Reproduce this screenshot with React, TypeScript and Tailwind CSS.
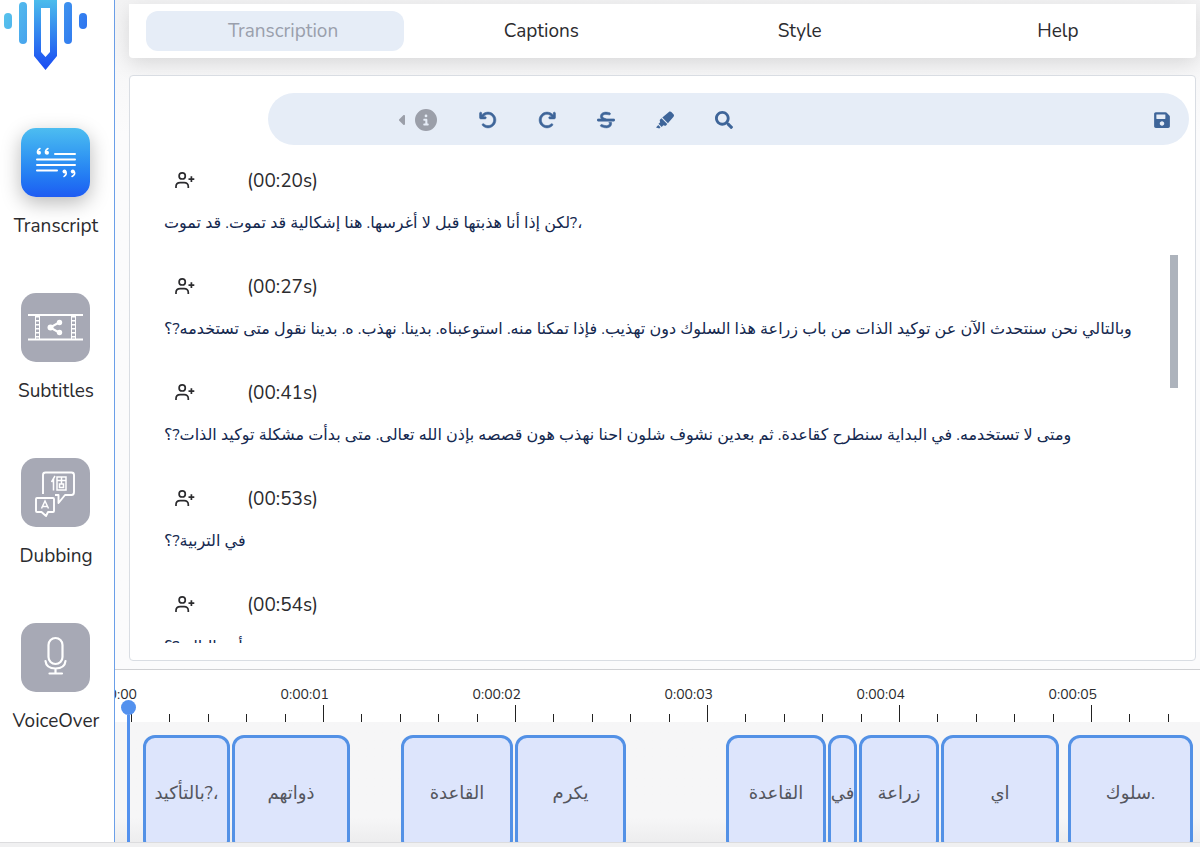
import React from "react";
import { FaArrowRotateLeft, FaArrowRotateRight, FaStrikethrough, FaCircleInfo, FaCaretLeft } from "react-icons/fa6";
import { FaHighlighter, FaSearch, FaSave } from "react-icons/fa";

const tabs = ["Transcription", "Captions", "Style", "Help"];

const segments = [
  { time: "(00:20s)", text: "لكن إذا أنا هذبتها قبل لا أغرسها. هنا إشكالية قد تموت. قد تموت?،" },
  {
    time: "(00:27s)",
    text: "وبالتالي نحن سنتحدث الآن عن توكيد الذات من باب زراعة هذا السلوك دون تهذيب. فإذا تمكنا منه. استوعبناه. بدينا. نهذب. ه. بدينا نقول متى تستخدمه?؟",
  },
  {
    time: "(00:41s)",
    text: "ومتى لا تستخدمه. في البداية سنطرح كقاعدة. ثم بعدين نشوف شلون احنا نهذب هون قصصه بإذن الله تعالى. متى بدأت مشكلة توكيد الذات?؟",
  },
  { time: "(00:53s)", text: "في التربية?؟" },
  { time: "(00:54s)", text: "أي بالتالي?؟" },
];

const clips = [
  { start: 28, end: 115, text: "بالتأكيد?،" },
  { start: 117, end: 235, text: "ذواتهم" },
  { start: 286, end: 398, text: "القاعدة" },
  { start: 400, end: 511, text: "يكرم" },
  { start: 611, end: 711, text: "القاعدة" },
  { start: 713, end: 742, text: "في" },
  { start: 744, end: 824, text: "زراعة" },
  { start: 826, end: 944, text: "اي" },
  { start: 953, end: 1078, text: "سلوك." },
];

const timeLabels = ["0:00:01", "0:00:02", "0:00:03", "0:00:04", "0:00:05"];
const tickGroups = [0, 1, 2, 3, 4, 5];

function Logo() {
  return (
    <svg viewBox="0 0 92 72" className="h-[72px] w-[92px]" role="img" aria-label="Logo">
      <defs>
        <linearGradient id="logo-bars" gradientUnits="userSpaceOnUse" x1="4" y1="0" x2="92" y2="40">
          <stop offset="0" stopColor="#5ac8ec" />
          <stop offset="1" stopColor="#2a6cf0" />
        </linearGradient>
        <linearGradient id="logo-pen" gradientUnits="userSpaceOnUse" x1="45" y1="0" x2="45" y2="66">
          <stop offset="0" stopColor="#4bbcec" />
          <stop offset="1" stopColor="#1c50f2" />
        </linearGradient>
      </defs>
      <g fill="url(#logo-bars)">
        <rect x="4" y="13" width="8" height="16" rx="4" />
        <rect x="19" y="2" width="8" height="42" rx="4" />
        <rect x="64" y="2" width="8" height="42" rx="4" />
        <rect x="79" y="13" width="8" height="16" rx="4" />
      </g>
      <path fill="url(#logo-pen)" fillRule="evenodd" d="M34 0H57V56L45.500 70L34 56ZM41 8V52L45.500 57L50 52V8Z" />
    </svg>
  );
}

function TranscriptIcon() {
  return (
    <svg viewBox="0 0 69 69" className="size-full" aria-hidden="true">
      <g stroke="#fff" strokeWidth="2" strokeLinecap="round">
        <path d="M34 26H54M16 31.500H54M16 37H54M16 42.500H36" />
      </g>
      <g fill="none" stroke="#fff" strokeWidth="1.500" strokeLinecap="round">
        <path d="M19 20.500Q16 22 16.500 25M27 20.500Q24 22 24.500 25" />
        <path d="M45 44Q46 46.500 43 48.500M53.500 44Q54.500 46.500 51 48.500" />
      </g>
      <g fill="#fff">
        <circle cx="18" cy="24.800" r="2" />
        <circle cx="26" cy="24.800" r="2" />
        <circle cx="43.500" cy="43.500" r="2" />
        <circle cx="51.800" cy="43.500" r="2" />
      </g>
    </svg>
  );
}

function SubtitlesIcon() {
  return (
    <svg viewBox="0 0 69 69" className="size-full" aria-hidden="true">
      <path d="M7 22H62M7 46.500H62" stroke="#fff" strokeWidth="2" />
      <path d="M14.500 22V46M18.500 22V46M50.500 22V46M54.500 22V46" stroke="#fff" strokeWidth="1" />
      <path d="M16.500 23V46M52.500 23V46" stroke="#fff" strokeWidth="4" strokeDasharray="1.500 2.500" />
      <path d="M39 29L29 34.500L39 40" fill="none" stroke="#fff" strokeWidth="2" />
      <g fill="#fff">
        <circle cx="38.500" cy="29.500" r="2.700" />
        <circle cx="29.500" cy="34.500" r="3" />
        <circle cx="38.500" cy="39.500" r="2.700" />
      </g>
    </svg>
  );
}

function DubbingIcon() {
  return (
    <svg viewBox="0 0 69 69" className="size-full" aria-hidden="true">
      <g fill="none" stroke="#fff" strokeWidth="1.900" strokeLinejoin="round">
        <path d="M22 36V17Q22 14.500 24.500 14.500H50.500Q53 14.500 53 17V34Q53 37 50.500 37H44L37.500 45V37H34" />
        <path d="M16 40H32Q33 40 33 41V53Q33 54 32 54H27L25 58L20.500 54H16Q15 54 15 53V41Q15 40 16 40Z" />
      </g>
      <g fill="none" stroke="#fff" strokeWidth="1.500">
        <path d="M34 18L30.500 24M32.500 21V32.500M36 19H45V32H36ZM36.500 22.500H44.500M40.500 19V26M38.500 26H42.500V29.500H38.500Z" />
        <path d="M20.500 50.500L24 43L27.500 50.500M21.800 48.500H26.200" />
      </g>
    </svg>
  );
}

function VoiceOverIcon() {
  return (
    <svg viewBox="0 0 69 69" className="size-full" aria-hidden="true">
      <g fill="none" stroke="#fff" strokeWidth="2.200" strokeLinecap="round">
        <rect x="27.500" y="15" width="14" height="26" rx="7" />
        <path d="M24.500 38C25 43 29 45.500 34.500 45.500S44 43 44.500 38M34.500 45.500V50M28.500 50.500H41" />
      </g>
    </svg>
  );
}

function UserPlusIcon() {
  return (
    <svg viewBox="0 0 20 20" className="size-5" fill="none" stroke="currentColor" strokeWidth="1.700" aria-hidden="true">
      <circle cx="7.200" cy="4.900" r="3.100" />
      <path d="M1 17V15.500C1 13 2.800 11.600 5.200 11.600H9.200C11.600 11.600 13.300 13 13.300 15.500V17" />
      <path d="M16.400 5.200V11M13.500 8.100H19.300" />
    </svg>
  );
}

const modes = [
  { label: "Transcript", icon: TranscriptIcon, active: true },
  { label: "Subtitles", icon: SubtitlesIcon, active: false },
  { label: "Dubbing", icon: DubbingIcon, active: false },
  { label: "VoiceOver", icon: VoiceOverIcon, active: false },
];

function Sidebar() {
  return (
    <aside className="flex w-[115px] shrink-0 flex-col overflow-hidden border-r border-[#6b9fe8] bg-white">
      <Logo />
      <nav className="mt-14 flex flex-col gap-[53px] pr-0.5">
        {modes.map(({ label, icon: Icon, active }) => (
          <button key={label} type="button" className="flex flex-col items-center">
            <span
              className={
                active
                  ? "mr-0.5 size-[69px] rounded-[15px] bg-linear-to-b from-[#4dbdf0] to-[#1f5bf2] shadow-[0_6px_20px_rgba(0,0,0,0.28)]"
                  : "mr-0.5 size-[69px] rounded-[15px] bg-[#a7a9b5]"
              }
            >
              <Icon />
            </span>
            <span className="mt-[15px] text-[19px] leading-7">{label}</span>
          </button>
        ))}
      </nav>
    </aside>
  );
}

function Tabs() {
  return (
    <nav className="grid grid-cols-4 rounded-b bg-white px-[17px] py-[7px] shadow-[0_6px_20px_rgba(0,0,0,0.12)]">
      {tabs.map((tab, i) => (
        <button
          key={tab}
          type="button"
          className={
            i === 0
              ? "h-10 rounded-xl bg-[#e6edf7] pl-4 text-[19px] text-[#9a9fac]"
              : "h-10 rounded-xl pl-4 text-[19px]"
          }
        >
          {tab}
        </button>
      ))}
    </nav>
  );
}

function Toolbar() {
  return (
    <div className="mr-1.5 ml-[138px] flex h-[52px] shrink-0 items-center rounded-full bg-[#e6edf7] pt-0.5 pr-[18px] pl-[131px] text-[18px] text-[#3e6599]">
      <button type="button" aria-label="Info" className="mr-[42px] flex items-center gap-2 text-[#9b9fa9]">
        <FaCaretLeft className="size-4 w-2" />
        <FaCircleInfo className="size-[22px]" />
      </button>
      <div className="flex gap-[41px]">
        <button type="button" aria-label="Undo"><FaArrowRotateLeft className="stroke-current stroke-[16px]" /></button>
        <button type="button" aria-label="Redo"><FaArrowRotateRight className="stroke-current stroke-[16px]" /></button>
        <button type="button" aria-label="Strikethrough"><FaStrikethrough className="stroke-current stroke-[16px]" /></button>
        <button type="button" aria-label="Highlight"><FaHighlighter /></button>
        <button type="button" aria-label="Search"><FaSearch /></button>
      </div>
      <button type="button" aria-label="Save" className="ml-auto"><FaSave /></button>
    </div>
  );
}

function Transcript() {
  return (
    <div className="flex min-h-0 flex-1 pr-[17px] pl-[34px]">
      <div className="min-w-0 flex-1 overflow-hidden pt-[22px]">
        {segments.map((segment) => (
          <section key={segment.time} className="h-[106px]">
            <div className="flex h-7 items-center">
              <button type="button" aria-label="Assign speaker" className="mr-[52px] ml-[11px]">
                <UserPlusIcon />
              </button>
              <span className="text-[19px]">{segment.time}</span>
            </div>
            <p dir="ltr" className="mt-3.5 text-base leading-7 whitespace-nowrap text-[#14284f]">
              {segment.text}
            </p>
          </section>
        ))}
      </div>
      <div className="mt-[110px] h-[133px] w-2 shrink-0 bg-[#adb3bc]" />
    </div>
  );
}

function Timeline() {
  return (
    <section className="relative shrink-0 overflow-hidden border-t border-[#cfd0d3] bg-[#f6f6f7]">
      <div className="bg-white pt-[15px]">
        <div className="flex h-5 items-center text-sm">
          <span className="flex w-[22px] shrink-0 justify-end">0:00:00</span>
          {timeLabels.map((label) => (
            <span key={label} className="w-48 shrink-0 text-right">{label}</span>
          ))}
        </div>
        <div className="flex h-[17px] pl-4">
          {tickGroups.map((group) => (
            <div key={group} className="grid w-48 shrink-0 grid-cols-5 items-end">
              <span className={group === 0 ? "h-2 border-l border-[#222]" : "h-[17px] border-l border-[#222]"} />
              <span className="h-2 border-l border-[#222]" />
              <span className="h-2 border-l border-[#222]" />
              <span className="h-2 border-l border-[#222]" />
              <span className="h-2 border-l border-[#222]" />
            </div>
          ))}
        </div>
      </div>
      <div className="flex h-[120px] overflow-hidden bg-linear-to-b from-[#f6f6f7] from-80% to-[#ededee] pt-[13px]">
        {clips.map((clip, i) => (
          <button
            key={clip.start}
            type="button"
            dir="ltr"
            className="flex h-[117px] shrink-0 items-center justify-center rounded-xl border-3 border-[#5391e6] bg-[#dde5fc] text-[18px] whitespace-nowrap text-[#54565e]"
            style={{ marginLeft: clip.start - (i ? clips[i - 1].end : 0), width: clip.end - clip.start }}
          >
            {clip.text}
          </button>
        ))}
      </div>
      <div className="absolute top-[30px] bottom-0 left-1.5 flex w-[15px] flex-col items-center">
        <span className="size-[15px] shrink-0 rounded-full bg-[#5391ee]" />
        <span className="w-[3px] flex-1 bg-[#5391ee]" />
      </div>
    </section>
  );
}

export default function App() {
  return (
    <div className="flex h-screen flex-col overflow-hidden bg-[#fafafb] font-['Nunito','Lato','DejaVu_Sans',sans-serif] text-[#2b2b2e]">
      <div className="flex min-h-0 flex-1">
        <Sidebar />
        <div className="flex min-w-0 flex-1 flex-col">
          <div className="flex min-h-0 flex-1 flex-col bg-linear-to-b from-[#f3f3f4] to-[#fbfbfc] to-20% pt-1 pr-1 pb-2 pl-3.5">
            <Tabs />
            <main className="mt-[17px] flex min-h-0 flex-1 flex-col rounded border border-[#d9dde3] bg-white pt-[17px] pb-[17px]">
              <Toolbar />
              <Transcript />
            </main>
          </div>
          <Timeline />
        </div>
      </div>
      <footer className="h-[5px] shrink-0 border-t border-[#dcdcde] bg-[#f0f0f1]" />
    </div>
  );
}
